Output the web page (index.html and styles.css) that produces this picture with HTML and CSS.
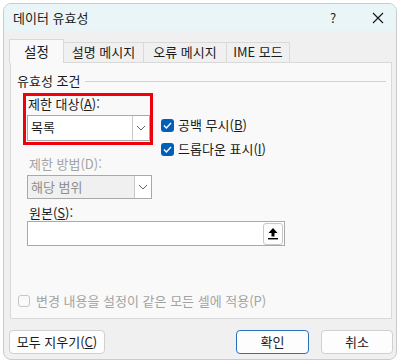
FILE: index.html
```html
<!DOCTYPE html>
<html lang="ko">
<head>
<meta charset="utf-8">
<link rel="stylesheet" href="styles.css">
</head>
<body>
<div class="dialog">
  <div class="titlebar">
    <span class="title">데이터 유효성</span>
    <span class="help">?</span>
    <span class="close"><svg width="12" height="12" viewBox="0 0 12 12"><path d="M1 1L11 11M11 1L1 11" stroke="#1a1a1a" stroke-width="1.2" fill="none"/></svg></span>
  </div>
  <div class="body">
    <div class="tabs">
      <div class="tab active">설정</div>
      <div class="tab t2">설명 메시지</div>
      <div class="tab t3">오류 메시지</div>
      <div class="tab t4">IME 모드</div>
    </div>
    <div class="panel">
      <div class="group-head"><span>유효성 조건</span><span class="rule"></span></div>
      <div class="row">
        <div class="redbox">
          <div class="label">제한 대상(<u>A</u>):</div>
          <div class="select">
            <span class="sel-text">목록</span>
            <span class="sel-arrow"><svg width="10" height="6" viewBox="0 0 10 6"><path d="M1 1L5 5L9 1" stroke="#606060" stroke-width="1" fill="none"/></svg></span>
          </div>
        </div>
        <div class="checks">
          <div class="check"><span class="box on"><svg width="9" height="7" viewBox="0 0 9 7"><path d="M1 3.5L3.4 6L8 1" stroke="#fff" stroke-width="1.4" fill="none"/></svg></span><span>공백 무시(<u>B</u>)</span></div>
          <div class="check"><span class="box on"><svg width="9" height="7" viewBox="0 0 9 7"><path d="M1 3.5L3.4 6L8 1" stroke="#fff" stroke-width="1.4" fill="none"/></svg></span><span>드롭다운 표시(<u>I</u>)</span></div>
        </div>
      </div>
      <div class="label disabled method">제한 방법(D):</div>
      <div class="select dis">
        <span class="sel-text">해당 범위</span>
        <span class="sel-arrow"><svg width="10" height="6" viewBox="0 0 10 6"><path d="M1 1L5 5L9 1" stroke="#606060" stroke-width="1" fill="none"/></svg></span>
      </div>
      <div class="label source">원본(<u>S</u>):</div>
      <div class="input">
        <span class="upbtn"><svg width="12" height="13" viewBox="0 0 12 13"><path d="M6 1L1.5 6H4.5V9.5H7.5V6H10.5Z" fill="#000"/><rect x="1" y="11" width="10" height="1.4" fill="#000"/></svg></span>
      </div>
      <div class="apply">
        <span class="box off"></span>
        <span>변경 내용을 설정이 같은 모든 셀에 적용(P)</span>
      </div>
    </div>
    <div class="buttons">
      <div class="btn clear">모두 지우기(<u>C</u>)</div>
      <div class="spacer"></div>
      <div class="btn ok">확인</div>
      <div class="btn cancel">취소</div>
    </div>
  </div>
</div>
</body>
</html>
```

FILE: styles.css
```css
* { box-sizing: border-box; }
html, body { margin: 0; padding: 0; background: #ffffff; }
body {
  width: 401px; height: 364px; overflow: hidden;
  font-family: "Noto Sans CJK KR", "Noto Sans", sans-serif;
  font-size: 13px; color: #1b1b1b;
}
u { text-decoration: underline; text-underline-offset: 1px; }
.dialog {
  margin: 3px 0 0 3px;
  width: 394px; height: 357px;
  border: 1px solid #c9cccd;
  border-radius: 8px;
  overflow: hidden;
  background: #f0f0f0;
  display: flex; flex-direction: column;
}
.titlebar {
  height: 27px; flex: none;
  background: #e9f5f7;
  display: flex; align-items: center;
  padding-left: 9px;
}
.title { font-size: 13px; line-height: 27px; flex: 1; }
.help { width: 20px; text-align: center; font-size: 13px; margin-right: 25px; }
.close { width: 20px; display: flex; justify-content: center; margin-right: 8px; }
.body { padding: 8px 4px 0 6px; flex: 1; display: flex; flex-direction: column; }
.tabs { height: 23px; display: flex; align-items: flex-end; position: relative; z-index: 1; }
.tab {
  height: 20px; line-height: 18px; text-align: center;
  border: 1px solid #d9d9d9; border-bottom: none; border-left: none;
  background: #f0f0f0;
}
.tab.active {
  height: 24px; line-height: 22px; width: 55px; margin-left: -1px; margin-bottom: -1px;
  border-left: 1px solid #d9d9d9; background: #f9f9f9;
  font-size: 13.5px;
}
.t2 { width: 80px; }
.t3 { width: 83px; }
.t4 { width: 63px; }
.panel {
  height: 257px; width: 382px;
  border: 1px solid #d9d9d9; background: #f9f9f9;
  padding: 11px 0 10px 0;
  display: flex; flex-direction: column;
}
.group-head { display: flex; align-items: center; height: 14px; line-height: 14px; padding-left: 6px; }
.rule { flex: 1; border-top: 1px solid #d2d2d2; margin: 0 5px 0 5px; }
.row { display: flex; margin-top: 5px; }
.redbox {
  margin-left: 12px; width: 130px; height: 52px;
  border: 3px solid #f0000c;
  padding-top: 1px;
}
.label { height: 14px; line-height: 14px; padding-left: 2px; }
.redbox .select { margin: 4px 0 0 1px; height: 26px; width: 123px; }
.select {
  display: flex; background: #fff; border: 1px solid #a9a9a9;
}
.sel-text { flex: 1; line-height: 22px; padding-left: 3px; font-size: 13px; }
.sel-arrow {
  width: 17px; border-left: 1px solid #c9c9c9; background: #fff;
  display: flex; align-items: center; justify-content: center;
}
.checks { margin-left: 8px; padding-top: 25px; display: flex; flex-direction: column; gap: 10px; }
.check { display: flex; align-items: center; height: 14px; gap: 4px; line-height: 14px; }
.box { width: 13px; height: 13px; border-radius: 3px; display: flex; align-items: center; justify-content: center; flex: none; }
.box.on { background: #005fb8; }
.box.off { width: 12px; height: 12px; border: 1px solid #c6c6c6; background: #f9f9f9; }
.disabled { color: #a3a3a3; }
.method { margin: 1px 0 0 16px; padding-left: 2px; }
.select.dis {
  margin: 4px 0 0 16px; height: 24px; width: 125px;
  background: #f0f0f0; color: #8e8e8e;
}
.select.dis .sel-text { line-height: 22px; }
.source { margin: 7px 0 0 16px; padding-left: 2px; }
.input {
  margin: 1px 0 0 16px; height: 25px; width: 258px;
  background: #fff; border: 1px solid #a9a9a9;
  display: flex; justify-content: flex-end; align-items: center; padding-right: 1px;
}
.upbtn {
  width: 20px; height: 22px; border: 1px solid #c8c8c8; border-radius: 3px;
  background: #fdfdfd; display: flex; align-items: center; justify-content: center;
}
.apply { margin: auto 0 0 7px; display: flex; align-items: center; gap: 6px; height: 14px; line-height: 14px; color: #a3a3a3; }
.buttons { display: flex; margin-top: 11px; height: 24px; }
.btn {
  height: 24px; line-height: 22px; text-align: center;
  border: 1px solid #d0d0d0; border-radius: 4px; background: #fdfdfd;
}
.clear { width: 96px; margin-left: -1px; }
.spacer { flex: 1; }
.ok { width: 73px; border-color: #2b6fbf; }
.cancel { width: 72px; margin-left: 12px; margin-right: -1px; }
```
